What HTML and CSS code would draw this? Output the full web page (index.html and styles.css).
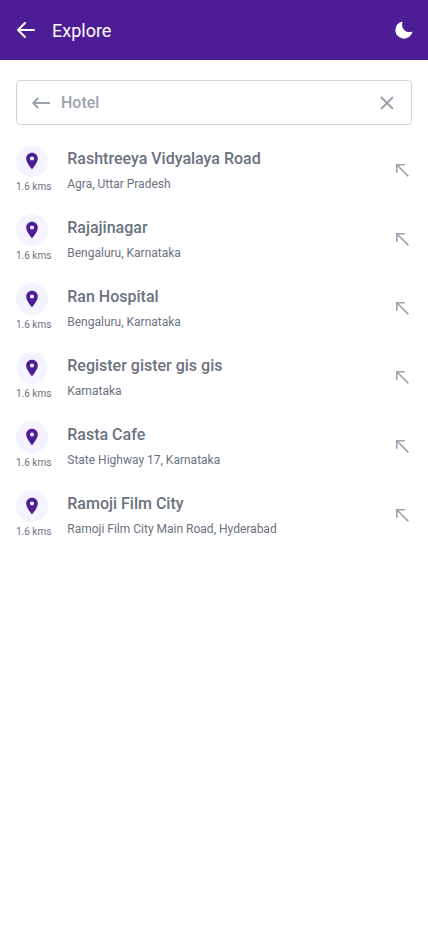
FILE: index.html
```
<!DOCTYPE html>
<html lang="en">
<head>
<meta charset="utf-8">
<meta name="viewport" content="width=device-width, initial-scale=1">
<title>Explore</title>
<link rel="stylesheet" href="styles.css">
</head>
<body>
<svg width="0" height="0" class="defs">
  <symbol id="pin" viewBox="0 0 24 24"><path fill="currentColor" d="M12 2C8.130 2 5 5.130 5 9c0 5.250 7 13 7 13s7-7.750 7-13c0-3.870-3.130-7-7-7zm0 9.500a2.500 2.500 0 0 1 0-5 2.500 2.500 0 0 1 0 5z"/></symbol>
  <symbol id="northwest" viewBox="0 0 14 14"><path fill="none" stroke="currentColor" stroke-width="1.600" d="M1.800 9.800V1.800H9.800M1.800 1.800l11.600 11.600"/></symbol>
</svg>
<header class="header">
  <svg class="back" viewBox="0 0 20 18"><path d="M18 9H2M9 2L2 9l7 7"/></svg>
  <h1 class="title">Explore</h1>
  <svg class="moon" viewBox="0 0 20 20"><path d="M8.600 1.400C7.400 4.800 8.200 7.900 10.300 9.900C12.400 12 15.500 12.700 18.600 11.600A8.700 8.700 0 1 1 8.600 1.400z"/></svg>
</header>
<main class="content">
  <div class="search">
    <svg class="search-back" viewBox="0 0 20 14"><path d="M19 7H2.200M7.200 2L2.200 7l5 5"/></svg>
    <span class="query">Hotel</span>
    <svg class="close" viewBox="0 0 14 14"><path d="M1 1l12 12M13 1L1 13"/></svg>
  </div>
  <ul class="results">
    <li class="result"><div class="distance"><span class="badge"><svg><use href="#pin"/></svg></span><small>1.6 kms</small></div><div class="place"><h2>Rashtreeya Vidyalaya Road</h2><p>Agra, Uttar Pradesh</p></div><svg class="fill"><use href="#northwest"/></svg></li>
    <li class="result"><div class="distance"><span class="badge"><svg><use href="#pin"/></svg></span><small>1.6 kms</small></div><div class="place"><h2>Rajajinagar</h2><p>Bengaluru, Karnataka</p></div><svg class="fill"><use href="#northwest"/></svg></li>
    <li class="result"><div class="distance"><span class="badge"><svg><use href="#pin"/></svg></span><small>1.6 kms</small></div><div class="place"><h2>Ran Hospital</h2><p>Bengaluru, Karnataka</p></div><svg class="fill"><use href="#northwest"/></svg></li>
    <li class="result"><div class="distance"><span class="badge"><svg><use href="#pin"/></svg></span><small>1.6 kms</small></div><div class="place"><h2>Register gister gis gis</h2><p>Karnataka</p></div><svg class="fill"><use href="#northwest"/></svg></li>
    <li class="result"><div class="distance"><span class="badge"><svg><use href="#pin"/></svg></span><small>1.6 kms</small></div><div class="place"><h2>Rasta Cafe</h2><p>State Highway 17, Karnataka</p></div><svg class="fill"><use href="#northwest"/></svg></li>
    <li class="result"><div class="distance"><span class="badge"><svg><use href="#pin"/></svg></span><small>1.6 kms</small></div><div class="place"><h2>Ramoji Film City</h2><p>Ramoji Film City Main Road, Hyderabad</p></div><svg class="fill"><use href="#northwest"/></svg></li>
  </ul>
</main>
</body>
</html>
```
FILE: styles.css
```
* { box-sizing: border-box; margin: 0; padding: 0; }
body { background: #fff; color: #6b7280; font-family: Roboto, sans-serif; }
svg { display: block; flex: none; }
.defs { display: none; }
.header { display: flex; align-items: center; height: 60px; padding: 0 14px 0 16px; background: #4c1d95; color: #fff; }
.back { width: 20px; height: 18px; fill: none; stroke: currentColor; stroke-width: 2; stroke-linecap: round; stroke-linejoin: round; }
.title { flex: 1; margin-left: 16px; padding-top: 2px; font-size: 18px; font-weight: 400; line-height: 28px; }
.moon { width: 20px; height: 20px; fill: currentColor; }
.content { padding: 20px 16px; }
.search { display: flex; align-items: center; height: 45px; padding: 0 17px 0 14px; border: 1px solid #d1d5db; border-radius: 4px; color: #9ca3af; }
.search-back { width: 20px; height: 14px; fill: none; stroke: currentColor; stroke-width: 2; }
.query { flex: 1; margin-left: 10px; font-size: 16px; font-weight: 500; line-height: 24px; }
.close { width: 14px; height: 14px; fill: none; stroke: currentColor; stroke-width: 2; }
.results { margin-top: 20px; list-style: none; }
.result { display: flex; height: 49px; margin-bottom: 20px; }
.distance { width: 36px; }
.badge { display: flex; align-items: center; justify-content: center; width: 32px; height: 32px; border-radius: 50%; background: #f5f3ff; color: #4c1d95; }
.badge svg { width: 20px; height: 20px; }
.distance small { display: block; margin-top: 2px; font-size: 10px; line-height: 15px; white-space: nowrap; }
.place { flex: 1; margin-left: 15.25px; }
.place h2 { margin-top: 2px; font-size: 16px; font-weight: 500; line-height: 24px; }
.place p { margin-top: 5px; font-size: 12px; line-height: 16px; }
.fill { width: 14px; height: 14px; margin: 18px 3px 0 0; color: #9ca3af; }
```
